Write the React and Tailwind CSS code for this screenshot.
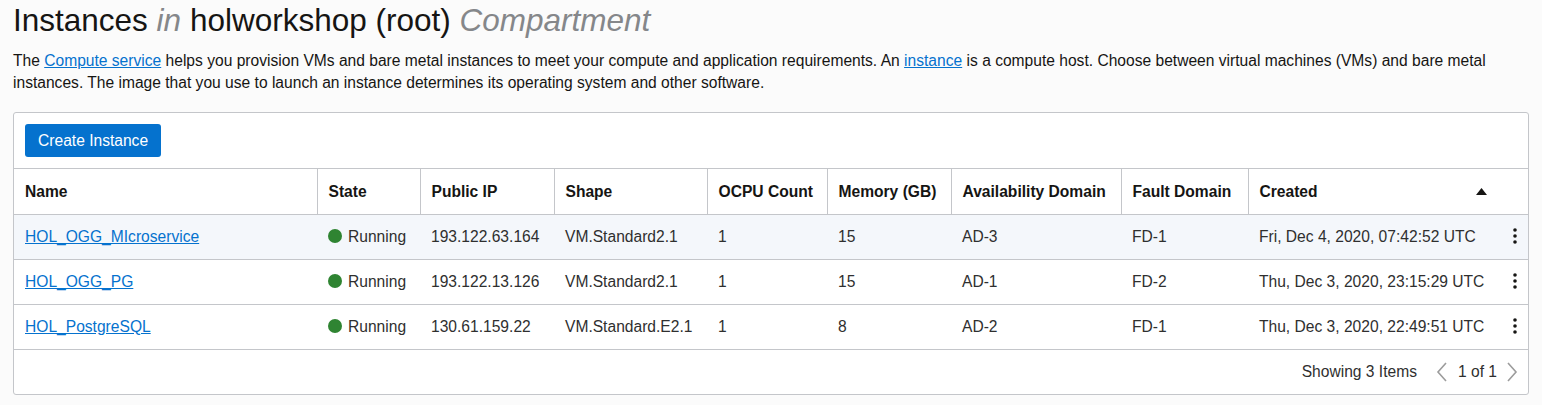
import React from 'react';

const columns = [
  { label: 'Name', width: 'w-[303px]' },
  { label: 'State', width: 'w-[103px]' },
  { label: 'Public IP', width: 'w-[134px]' },
  { label: 'Shape', width: 'w-[153px]' },
  { label: 'OCPU Count', width: 'w-[120px]' },
  { label: 'Memory (GB)', width: 'w-[124px]' },
  { label: 'Availability Domain', width: 'w-[170px]' },
  { label: 'Fault Domain', width: 'w-[127px]' },
  { label: 'Created', width: 'w-[280px]' },
];

const instances = [
  {
    name: 'HOL_OGG_MIcroservice',
    ip: '193.122.63.164',
    shape: 'VM.Standard2.1',
    ocpu: '1',
    memory: '15',
    ad: 'AD-3',
    fd: 'FD-1',
    created: 'Fri, Dec 4, 2020, 07:42:52 UTC',
    highlight: true,
  },
  {
    name: 'HOL_OGG_PG',
    ip: '193.122.13.126',
    shape: 'VM.Standard2.1',
    ocpu: '1',
    memory: '15',
    ad: 'AD-1',
    fd: 'FD-2',
    created: 'Thu, Dec 3, 2020, 23:15:29 UTC',
  },
  {
    name: 'HOL_PostgreSQL',
    ip: '130.61.159.22',
    shape: 'VM.Standard.E2.1',
    ocpu: '1',
    memory: '8',
    ad: 'AD-2',
    fd: 'FD-1',
    created: 'Thu, Dec 3, 2020, 22:49:51 UTC',
  },
];

const Kebab = () => (
  <svg width="4" height="16" viewBox="0 0 4 16" className="fill-[#161513]">
    <circle cx="2" cy="2" r="1.8" />
    <circle cx="2" cy="8" r="1.8" />
    <circle cx="2" cy="14" r="1.8" />
  </svg>
);

const Chevron = ({ dir }) => (
  <svg width="12" height="20" viewBox="0 0 12 20" fill="none" stroke="#9c9c9c" strokeWidth="1.6">
    {dir === 'left' ? <path d="M10 1 L2 10 L10 19" /> : <path d="M2 1 L10 10 L2 19" />}
  </svg>
);

export default function App() {
  return (
    <div className="min-h-[405px] bg-[#fbfbfb] px-[13px] pt-[2px] font-['Liberation_Sans',Arial,sans-serif] text-[#161513]">
      {/* Title */}
      <h1 className="text-[31.5px] leading-[37px] font-normal text-[#161513]">
        Instances <em className="text-[#85878a]">in</em> holworkshop (root){' '}
        <em className="text-[#85878a]">Compartment</em>
      </h1>

      <p className="mt-[11px] text-[15.6px] leading-[22px] text-[#161513] pr-[20px]">
        The{' '}
        <a href="#" className="text-[#0572ce] underline">
          Compute service
        </a>{' '}
        helps you provision VMs and bare metal instances to meet your compute and application requirements. An{' '}
        <a href="#" className="text-[#0572ce] underline">
          instance
        </a>{' '}
        is a compute host. Choose between virtual machines (VMs) and bare metal instances. The image that you use to
        launch an instance determines its operating system and other software.
      </p>

      {/* Panel */}
      <div className="mt-[18px] w-[1516px] border border-[#c4c6ca] rounded-[3px] bg-white">
        <div className="px-[11px] py-[11px] border-b border-[#c4c6ca]">
          <button className="h-[33px] px-[13px] rounded-[3px] bg-[#0572ce] text-white text-[15.6px]">
            Create Instance
          </button>
        </div>

        <table className="table-fixed w-full border-collapse text-[15.6px]">
          <thead>
            <tr className="h-[45px]">
              {columns.map((col, i) => (
                <th
                  key={col.label}
                  className={`${col.width} text-left font-bold px-[11px] text-[#161513] border-b border-[#c4c6ca] ${
                    i < columns.length - 1 ? 'border-r' : ''
                  }`}
                >
                  {col.label === 'Created' ? (
                    <div className="flex items-center justify-between pr-[30px]">
                      <span>Created</span>
                      <svg width="11" height="7" viewBox="0 0 11 7">
                        <path d="M0 7 L5.5 0 L11 7 Z" fill="#161513" />
                      </svg>
                    </div>
                  ) : (
                    col.label
                  )}
                </th>
              ))}
            </tr>
          </thead>
          <tbody className="text-[#2f2f2f]">
            {instances.map((row) => (
              <tr
                key={row.name}
                className={`h-[45px] border-b border-[#c4c6ca] ${row.highlight ? 'bg-[#f4f7fb]' : ''}`}
              >
                <td className="px-[11px]">
                  <a href="#" className="text-[#0572ce] underline">
                    {row.name}
                  </a>
                </td>
                <td className="px-[11px]">
                  <span className="flex items-center gap-[6px]">
                    <span className="w-[14px] h-[14px] rounded-full bg-[#2f8432]" />
                    Running
                  </span>
                </td>
                <td className="px-[11px]">{row.ip}</td>
                <td className="px-[11px]">{row.shape}</td>
                <td className="px-[11px]">{row.ocpu}</td>
                <td className="px-[11px]">{row.memory}</td>
                <td className="px-[11px]">{row.ad}</td>
                <td className="px-[11px]">{row.fd}</td>
                <td className="px-[11px]">
                  <div className="flex items-center justify-between">
                    <span>{row.created}</span>
                    <Kebab />
                  </div>
                </td>
              </tr>
            ))}
          </tbody>
        </table>

        {/* Footer */}
        <div className="h-[44px] flex items-center justify-end pr-[10px] text-[15.6px] text-[#2f2f2f]">
          <span>Showing 3 Items</span>
          <span className="ml-[19px]">
            <Chevron dir="left" />
          </span>
          <span className="ml-[10px]">1 of 1</span>
          <span className="ml-[9px]">
            <Chevron dir="right" />
          </span>
        </div>
      </div>
    </div>
  );
}
